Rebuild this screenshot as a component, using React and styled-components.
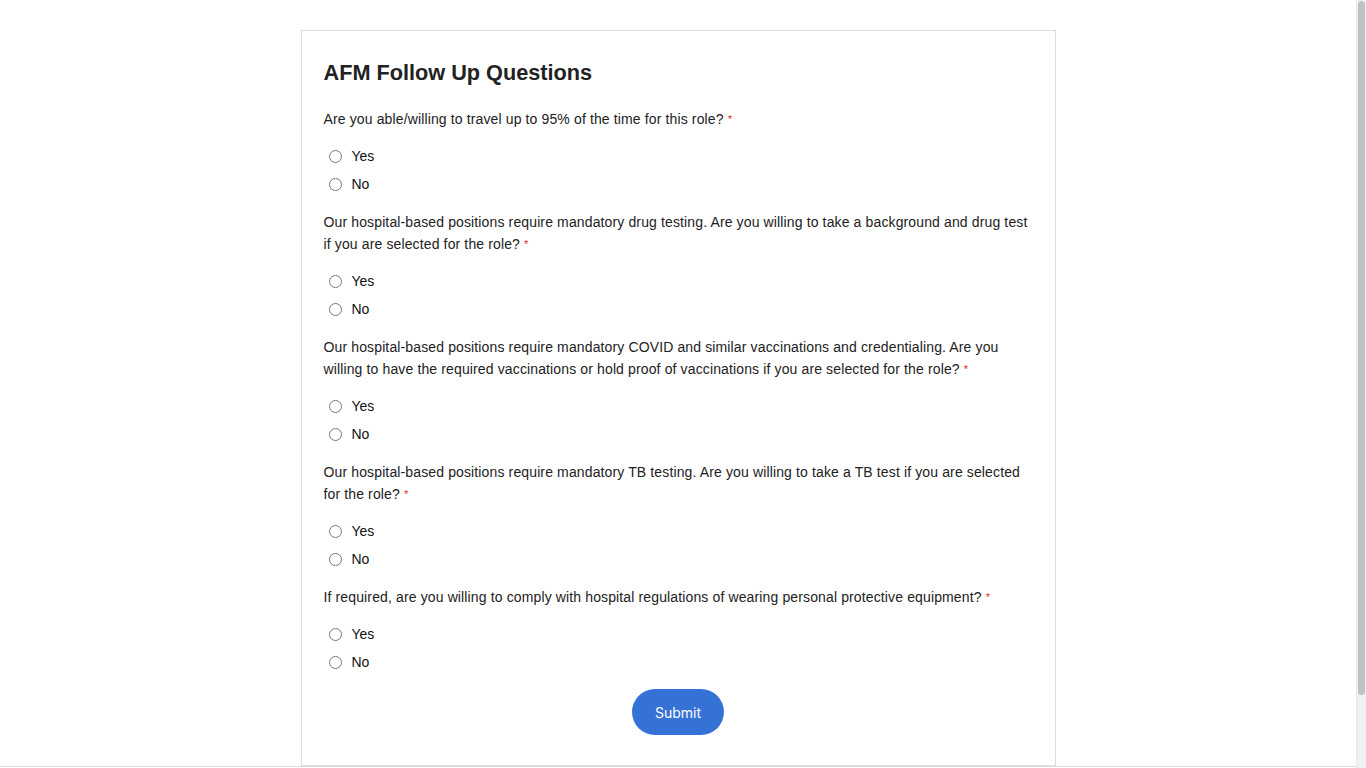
import React from "react";
import styled, { createGlobalStyle } from "styled-components";

const Global = createGlobalStyle`
  html { background: #fff; overflow: hidden; }
  body {
    margin: 0;
    font-family: "Liberation Sans", Arial, sans-serif;
    color: #222;
    background: #fff;
  }
`;

const Page = styled.div`
  padding: 30px 10px 0 0;
`;

const ScrollTrack = styled.div`
  position: fixed;
  top: 0;
  right: 0;
  width: 10px;
  height: 100vh;
  background: #f1f1f1;
  border-left: 1px solid #e8e8e8;
  box-sizing: border-box;
`;

const ScrollThumb = styled.div`
  margin: 1px 0 0 1px;
  width: 7px;
  height: 694px;
  border-radius: 4px;
  background: #c1c1c1;
`;

const Card = styled.form`
  box-sizing: border-box;
  width: 755px;
  margin: 0 auto;
  border: 1px solid #ddd;
  padding: 28px 22px 30px;
  background: #fff;
`;

const Title = styled.h1`
  margin: 0 0 21px;
  font-size: 21.7px;
  line-height: 28px;
  font-weight: 700;
  color: #222;
`;

const Question = styled.fieldset`
  border: 0;
  margin: 0 0 13px;
  padding: 0;
`;

const Prompt = styled.legend`
  padding: 0;
  margin: 0 0 12px;
  font-size: 14px;
  line-height: 22px;
  letter-spacing: 0.13px;
  color: #222;
`;

const Required = styled.span`
  color: #e0291c;
  font-size: 11px;
  margin-left: 4px;
  vertical-align: 1px;
`;

const Option = styled.label`
  display: flex;
  align-items: center;
  height: 28px;
  font-size: 14px;
  color: #111;
  cursor: pointer;
`;

const Radio = styled.input`
  width: 13px;
  height: 13px;
  margin: 0 10px 0 5px;
`;

const Actions = styled.div`
  display: flex;
  justify-content: center;
`;

const Submit = styled.button`
  height: 46px;
  width: 92px;
  border: 0;
  border-radius: 23px;
  background: #3572d6;
  color: #fff;
  font-family: Inter, "Liberation Sans", sans-serif;
  font-size: 14px;
  cursor: pointer;
`;

const Footer = styled.div`
  border-top: 1px solid #ddd;
  height: 82px;
`;

const questions = [
  "Are you able/willing to travel up to 95% of the time for this role?",
  "Our hospital-based positions require mandatory drug testing. Are you willing to take a background and drug test if you are selected for the role?",
  "Our hospital-based positions require mandatory COVID and similar vaccinations and credentialing. Are you willing to have the required vaccinations or hold proof of vaccinations if you are selected for the role?",
  "Our hospital-based positions require mandatory TB testing. Are you willing to take a TB test if you are selected for the role?",
  "If required, are you willing to comply with hospital regulations of wearing personal protective equipment?",
];

export default function App() {
  return (
    <>
      <Global />
      <Page>
        <Card onSubmit={(e) => e.preventDefault()}>
          <Title>AFM Follow Up Questions</Title>
          {questions.map((q, i) => (
            <Question key={i}>
              <Prompt>
                {q}
                <Required>*</Required>
              </Prompt>
              <Option>
                <Radio type="radio" name={`q${i}`} value="yes" />
                Yes
              </Option>
              <Option>
                <Radio type="radio" name={`q${i}`} value="no" />
                No
              </Option>
            </Question>
          ))}
          <Actions>
            <Submit type="submit">Submit</Submit>
          </Actions>
        </Card>
        <Footer />
      </Page>
      <ScrollTrack>
        <ScrollThumb />
      </ScrollTrack>
    </>
  );
}
